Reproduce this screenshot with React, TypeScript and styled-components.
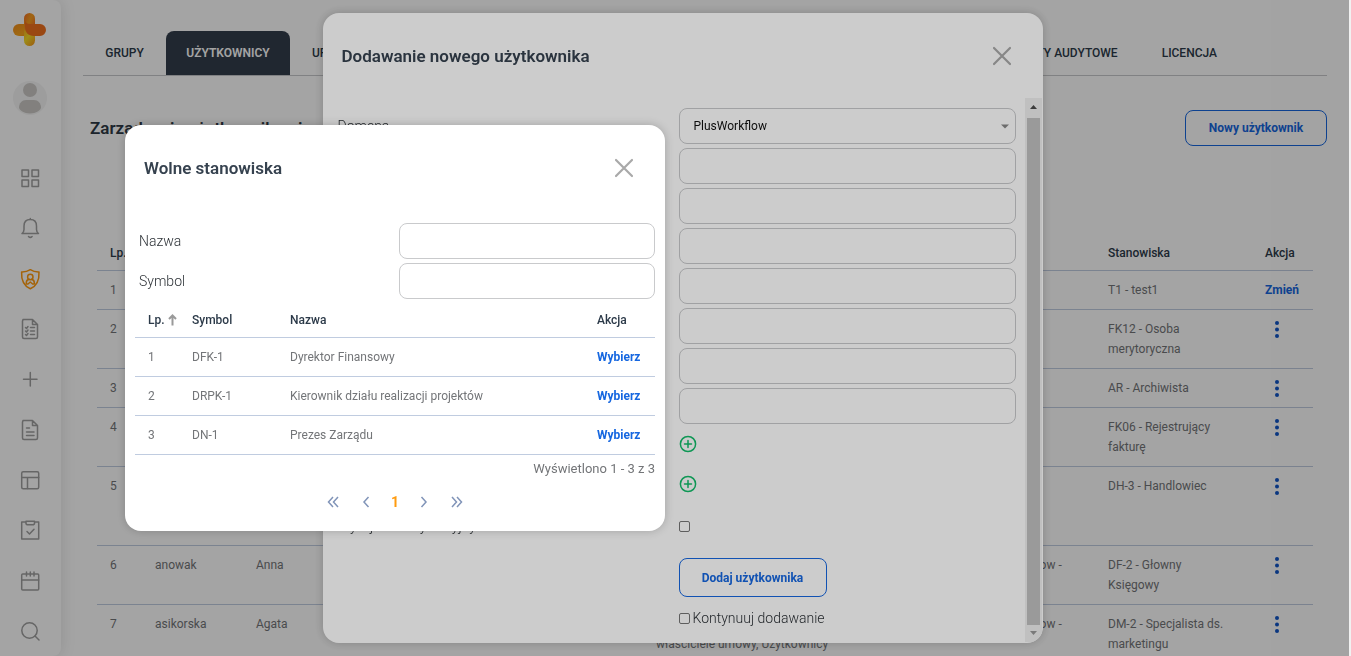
import React from "react";
import styled, { createGlobalStyle, css } from "styled-components";

const GlobalStyle = createGlobalStyle`
  *, *::before, *::after { box-sizing: border-box; }
  body {
    margin: 0;
    background: #f1f1f1;
    color: #3a4149;
    font-family: Roboto, "Liberation Sans", sans-serif;
    font-size: 13px;
    line-height: 20px;
    overflow: hidden;
  }
  button, input, select { font-family: inherit; }
`;

/* ---------- page frame ---------- */

const Page = styled.div`
  display: flex;
  height: 100vh;
  margin-right: 2px;
  background: #fff;
  overflow: hidden;
`;

const Sidebar = styled.aside`
  flex: none;
  display: flex;
  flex-direction: column;
  align-items: center;
  width: 61px;
  padding: 13px 1px 13px 0;
  border-radius: 0 8px 8px 0;
  box-shadow: 0 0 16px rgba(0, 0, 0, 0.12);
`;

const Avatar = styled.button`
  display: block;
  margin: 34px 0 51px;
  padding: 0;
  border: 0;
  background: none;
  line-height: 0;
`;

const SideNav = styled.nav`
  flex: 1;
  display: flex;
  flex-direction: column;
  justify-content: space-between;
`;

const SideLink = styled.a<{ $active?: boolean }>`
  display: block;
  height: 24px;
  color: ${(p) => (p.$active ? "#ff9b0f" : "#9f9f9f")};
`;

const Main = styled.main`
  flex: 1;
  min-width: 0;
  padding: 31px 22px 0;
`;

const Tabs = styled.nav`
  display: flex;
  justify-content: space-between;
  border-bottom: 1px solid #c8c9cc;
  padding-right: 88px;
`;

const TabGroup = styled.div`
  display: flex;
`;

const Tab = styled.a<{ $active?: boolean; $width?: number }>`
  display: block;
  min-width: ${(p) => p.$width ?? 0}px;
  padding: 12px 22px;
  color: #2c3a49;
  font-size: 12px;
  font-weight: 500;
  text-align: center;
  text-decoration: none;
  white-space: nowrap;
  ${(p) =>
    p.$active &&
    css`
      padding: 12px 20px;
      border-radius: 8px 8px 0 0;
      background: #323d4b;
      color: #fff;
      font-weight: 600;
    `}
`;

const PageHead = styled.header`
  display: flex;
  align-items: center;
  justify-content: space-between;
  padding: 34px 0 97px 7px;
`;

const PageTitle = styled.h1`
  margin: 0;
  color: #2e3945;
  font-size: 17px;
  font-weight: 600;
  line-height: 24px;
`;

const OutlineButton = styled.button<{ $width: number; $tall?: boolean }>`
  width: ${(p) => p.$width}px;
  height: ${(p) => (p.$tall ? 39 : 36)}px;
  padding: 0;
  border: 1px solid #1667e0;
  border-radius: 8px;
  background: transparent;
  color: #1667e0;
  font-size: 12px;
  font-weight: 700;
`;

/* ---------- tables ---------- */

const DataTable = styled.table`
  width: 100%;
  border-collapse: collapse;
  table-layout: fixed;
`;

const UsersWrap = styled.div`
  padding: 0 14px;
`;

const HeadCell = styled.th`
  padding: 0 0 7px 13px;
  border-bottom: 1px solid #c0cce0;
  color: #2c3a49;
  font-size: 12px;
  font-weight: 500;
  text-align: left;
  white-space: nowrap;
`;

const Cell = styled.td`
  padding: 9px 18px 9px 13px;
  border-bottom: 1px solid #c0cce0;
  color: #737578;
  font-size: 12px;
  vertical-align: top;
`;

const Col = styled.col<{ $w?: number }>`
  width: ${(p) => (p.$w ? `${p.$w}px` : "auto")};
`;

const ActionLink = styled.a`
  color: #1667e0;
  font-weight: 700;
  text-decoration: none;
`;

const MenuButton = styled.button`
  display: block;
  margin: 0;
  padding: 0 0 0 9px;
  border: 0;
  background: none;
  line-height: 0;
`;

const SortMark = styled.span`
  display: inline-block;
  margin-left: 3px;
  vertical-align: -2px;
  line-height: 0;
`;

/* ---------- dialogs ---------- */

const Layer = styled.div<{ $level: number }>`
  position: fixed;
  inset: 0 2px 0 0;
  z-index: ${(p) => p.$level};
  background: rgba(0, 0, 0, 0.2);
`;

const Dialog = styled.section`
  position: absolute;
  border-radius: 16px;
  background: #fff;
  box-shadow: 0 0 10px rgba(0, 0, 0, 0.2);
  overflow: hidden;
`;

const UserDialog = styled(Dialog)`
  top: 13px;
  bottom: 13px;
  left: calc(50% - 352px);
  width: 720px;
  display: flex;
  flex-direction: column;
`;

const PositionDialog = styled(Dialog)`
  top: 125px;
  left: 125px;
  width: 540px;
`;

const DialogHead = styled.header`
  flex: none;
  display: flex;
  align-items: center;
  justify-content: space-between;
  height: 85px;
  padding: 0 31px 0 19px;
`;

const DialogTitle = styled.h2`
  margin: 0;
  color: #36424f;
  font-size: 17px;
  font-weight: 600;
  line-height: 24px;
`;

const CloseButton = styled.button`
  padding: 0;
  border: 0;
  background: none;
  line-height: 0;
`;

const DialogBody = styled.div`
  flex: 1;
  display: flex;
  min-height: 0;
`;

const UserForm = styled.form`
  flex: 1;
  padding: 10px 9px 0 15px;
`;

const FieldRow = styled.div`
  display: grid;
  grid-template-columns: 1fr 337px;
  align-items: center;
  min-height: 36px;
  margin-bottom: 4px;
`;

const NarrowRow = styled(FieldRow)`
  grid-template-columns: 1fr 256px;
  padding-left: 4px;
`;

const Label = styled.label`
  color: #2b3035;
  font-size: 14px;
  font-weight: 300;
`;

const control = css`
  width: 100%;
  height: 36px;
  padding: 0 14px;
  border: 1px solid #c9cacc;
  border-radius: 8px;
  background: #fff;
  color: #111;
  font-size: 12px;
`;

const TextInput = styled.input`
  ${control}
`;

const SelectWrap = styled.div`
  position: relative;
`;

const Select = styled.select`
  ${control}
  appearance: none;
`;

const Caret = styled.svg`
  position: absolute;
  top: 16px;
  right: 7px;
  pointer-events: none;
`;

const AddButton = styled.button`
  align-self: start;
  justify-self: start;
  padding: 7px 0 0;
  border: 0;
  background: none;
  line-height: 0;
`;

const Check = styled.input`
  appearance: none;
  width: 11px;
  height: 11px;
  margin: 0;
  border: 1px solid #767676;
  border-radius: 2px;
`;

const FormFoot = styled.div`
  width: 337px;
  margin: 14px 0 0 auto;
`;

const ContinueRow = styled.div`
  display: flex;
  align-items: center;
  gap: 3px;
  margin-top: 11px;
`;

const ScrollBar = styled.div`
  flex: none;
  display: flex;
  flex-direction: column;
  width: 17px;
  margin: 0 1px 1px 0;
  background: #f1f1f1;
`;

const ScrollArrow = styled.svg`
  flex: none;
  display: block;
`;

const ScrollThumb = styled.div`
  flex: 1;
  margin: 0 2px;
  background: #c1c1c1;
`;

const PositionBody = styled.div`
  padding: 13px 10px 21px;
`;

const PositionTable = styled(DataTable)`
  margin-top: 11px;
`;

const Summary = styled.p`
  margin: 4px 0 0;
  color: #737578;
  font-size: 13px;
  text-align: right;
`;

const Pager = styled.nav`
  display: flex;
  align-items: center;
  justify-content: center;
  gap: 17px;
  margin-top: 15px;
`;

const PageButton = styled.button`
  display: grid;
  place-items: center;
  width: 16px;
  height: 16px;
  padding: 0;
  border: 0;
  background: none;
  color: #8094b8;
`;

const CurrentPage = styled.span`
  color: #ff9b0f;
  font-size: 14px;
  font-weight: 700;
  line-height: 16px;
`;

/* ---------- drawings ---------- */

const Glyph = ({ children }: { children: React.ReactNode }) => (
  <svg
    width="24"
    height="24"
    viewBox="0 0 24 24"
    fill="none"
    stroke="currentColor"
    strokeWidth="1.5"
    strokeLinecap="round"
    strokeLinejoin="round"
    aria-hidden="true"
  >
    {children}
  </svg>
);

const Logo = () => (
  <svg width="34" height="34" viewBox="0 0 34 34" aria-label="Plus" role="img">
    <defs>
      <linearGradient id="lgYellow" x1="0" y1="0" x2="1" y2="1">
        <stop offset="0" stopColor="#f08c1c" />
        <stop offset="0.6" stopColor="#f9a51e" />
        <stop offset="1" stopColor="#f5861f" />
      </linearGradient>
      <linearGradient id="lgFoot" x1="0" y1="0" x2="0.8" y2="1">
        <stop offset="0" stopColor="#f9ae1f" />
        <stop offset="0.45" stopColor="#f5dc28" />
        <stop offset="1" stopColor="#f49a1c" />
      </linearGradient>
      <linearGradient id="lgTop" x1="0" y1="0" x2="1" y2="0.8">
        <stop offset="0" stopColor="#ef6a22" />
        <stop offset="0.5" stopColor="#f9a01f" />
        <stop offset="1" stopColor="#ef6a22" />
      </linearGradient>
    </defs>
    <rect x="0" y="11" width="24" height="12" rx="6" fill="url(#lgYellow)" />
    <path d="M11 17h11v10.500a5.500 5.500 0 0 1-11 0z" fill="url(#lgFoot)" />
    <path d="M11 15V5.500a5.500 5.500 0 0 1 11 0V12l-5 8z" fill="url(#lgTop)" />
    <path d="M12 6c0 4 2 5 6 5h9a6 6 0 0 1 0 12h-6c-6 0-9-4-9-9z" fill="#f0701f" />
  </svg>
);

const Person = () => (
  <svg width="34" height="34" viewBox="0 0 34 34" aria-hidden="true">
    <circle cx="17" cy="17" r="17" fill="#f4f4f4" />
    <circle cx="17" cy="9" r="7" fill="#cac8c5" />
    <path d="M6 26.500c0-4 3-7.500 7-7.500h8c4 0 7 3.500 7 7.500 0 2.500-5 6-11 6s-11-3.500-11-6z" fill="#cac8c5" />
  </svg>
);

const CloseIcon = () => (
  <svg width="20" height="20" viewBox="0 0 20 20" stroke="#a9a9a9" strokeWidth="2.200" strokeLinecap="round" aria-hidden="true">
    <path d="M2 2l16 16M18 2L2 18" />
  </svg>
);

const Dots = () => (
  <svg width="6" height="20" viewBox="0 0 6 20" fill="#1055c8" aria-hidden="true">
    <circle cx="3" cy="4" r="2" />
    <circle cx="3" cy="10.500" r="2" />
    <circle cx="3" cy="17" r="2" />
  </svg>
);

const PlusCircle = () => (
  <svg width="18" height="18" viewBox="0 0 18 18" fill="none" stroke="#12bd6a" strokeWidth="1.500" strokeLinecap="round" aria-hidden="true">
    <circle cx="9" cy="9" r="7.600" />
    <path d="M9 5.500v7M5.500 9h7" />
  </svg>
);

const Chevron = ({ d }: { d: string }) => (
  <svg width="12" height="12" viewBox="0 0 12 12" fill="none" stroke="currentColor" strokeWidth="1.500" aria-hidden="true">
    <path d={d} />
  </svg>
);

const fileOutline = "M5 2.500h9.500l5 5V20a1.500 1.500 0 0 1-1.500 1.500H6A1.500 1.500 0 0 1 4.500 20V4A1.500 1.500 0 0 1 6 2.500M14.500 2.500v5h5";

const sideItems: { name: string; active?: boolean; icon: React.ReactNode }[] = [
  {
    name: "Pulpit",
    icon: (
      <>
        <rect x="4" y="4" width="6.500" height="6.500" />
        <rect x="14" y="4" width="6.500" height="6.500" />
        <rect x="4" y="14" width="6.500" height="6.500" />
        <rect x="14" y="14" width="6.500" height="6.500" />
      </>
    ),
  },
  {
    name: "Powiadomienia",
    icon: (
      <>
        <path d="M4 17.500h16.500c-1.500-1-2-2-2-4V10c0-4-2.200-6.500-6.200-6.500S6 6 6 10v3.500c0 2-.5 3-2 4zM12.300 2.500v1" />
        <path d="M10.500 20.500c1 1 2.600 1 3.600 0" />
      </>
    ),
  },
  {
    name: "Administracja",
    active: true,
    icon: (
      <>
        <path d="M12.300 2.700c2.700 1.800 5.500 2.400 8.700 2.300.4 7.300-1.600 13.600-8.700 16.800C5.200 18.600 3.200 12.300 3.600 5c3.200.1 6-.5 8.700-2.300z" />
        <circle cx="12.300" cy="10" r="2.700" />
        <path d="M8.300 17v-1.200c0-1.800 1.200-3.200 2.900-3.500M16.300 17v-1.200c0-1.800-1.200-3.200-2.900-3.500M8.500 17h1.500l2.300-2 2.300 2h1.500" />
      </>
    ),
  },
  {
    name: "Zadania",
    icon: (
      <>
        <path d={fileOutline} />
        <path d="M12.500 10.500h4M12.500 14h4M12.500 17.500h4M7.500 10.500l1 1 1.500-2M7.500 14l1 1 1.500-2M7.500 17.500l1 1 1.500-2" />
      </>
    ),
  },
  { name: "Dodaj", icon: <path d="M12.300 5.500v13.500M5.500 12.300h13.500" /> },
  {
    name: "Dokumenty",
    icon: (
      <>
        <path d={fileOutline} />
        <path d="M8.500 10h3M8.500 14h7.500M8.500 17.500h7.500" />
      </>
    ),
  },
  {
    name: "Widoki",
    icon: (
      <>
        <rect x="3.700" y="3.700" width="17" height="17" rx="1.500" />
        <path d="M3.700 9.500h17M9.500 9.500v11" />
      </>
    ),
  },
  {
    name: "Sprawy",
    icon: (
      <>
        <path d="M8 4H3.700v17h17V4h-4.200M8 3.200h8.500v2.600l-1.200 1H9.200L8 5.800zM9 13.500l2.500 2.500 4.500-4.800" />
      </>
    ),
  },
  {
    name: "Kalendarz",
    icon: (
      <>
        <rect x="3.700" y="5" width="17" height="16" rx="1" />
        <path d="M3.700 11h17M8.500 3v4M12.300 3v4M16 3v4" />
      </>
    ),
  },
  {
    name: "Szukaj",
    icon: (
      <>
        <circle cx="11.500" cy="11.500" r="7.700" />
        <path d="M17 17l4 4" />
      </>
    ),
  },
];

const users = [
  { login: "admin", first: "Adam", last: "Admin", groups: ["Administratorzy"], unit: "", post: "T1 - test1", edit: true },
  { login: "akowal", first: "Anna", last: "Kowal", groups: ["Użytkownicy"], unit: "", post: "FK12 - Osoba merytoryczna" },
  { login: "alis", first: "Adam", last: "Lis", groups: ["Użytkownicy"], unit: "", post: "AR - Archiwista" },
  { login: "amazur", first: "Alicja", last: "Mazur", groups: ["Użytkownicy"], unit: "", post: "FK06 - Rejestrujący fakturę" },
  {
    login: "anowacka",
    first: "Anna",
    last: "Nowacka",
    groups: ["Handlowcy, Koordynatorzy,", "Opiekunowie klienta,", "Użytkownicy"],
    unit: "",
    post: "DH-3 - Handlowiec",
  },
  { login: "anowak", first: "Anna", last: "Nowak", groups: ["Księgowość"], unit: "PlusWorkflow -", post: "DF-2 - Głowny Księgowy" },
  {
    login: "asikorska",
    first: "Agata",
    last: "Sikorska",
    groups: ["Koordynatorzy,", "właściciele umowy, Użytkownicy"],
    unit: "PlusWorkflow -",
    post: "DM-2 - Specjalista ds. marketingu",
  },
];

const positions = [
  { symbol: "DFK-1", name: "Dyrektor Finansowy" },
  { symbol: "DRPK-1", name: "Kierownik działu realizacji projektów" },
  { symbol: "DN-1", name: "Prezes Zarządu" },
];

const userFields = ["Login", "Hasło", "Powtórz hasło", "Imię", "Nazwisko", "E-mail", "Numer"];

export default function App() {
  return (
    <>
      <GlobalStyle />
      <Page>
        <Sidebar>
          <Logo />
          <Avatar type="button" aria-label="Profil">
            <Person />
          </Avatar>
          <SideNav>
            {sideItems.map((item) => (
              <SideLink key={item.name} href="#" aria-label={item.name} $active={item.active}>
                <Glyph>{item.icon}</Glyph>
              </SideLink>
            ))}
          </SideNav>
        </Sidebar>
        <Main>
          <Tabs>
            <TabGroup>
              <Tab href="#" $width={83}>GRUPY</Tab>
              <Tab href="#" $width={124} $active>UŻYTKOWNICY</Tab>
              <Tab href="#">UPRAWNIENIA</Tab>
            </TabGroup>
            <TabGroup>
              <Tab href="#">RAPORTY AUDYTOWE</Tab>
              <Tab href="#">LICENCJA</Tab>
            </TabGroup>
          </Tabs>
          <PageHead>
            <PageTitle>Zarządzanie użytkownikami</PageTitle>
            <OutlineButton type="button" $width={142}>Nowy użytkownik</OutlineButton>
          </PageHead>
          <UsersWrap>
            <DataTable>
              <colgroup>
                <Col $w={45} />
                <Col $w={101} />
                <Col $w={140} />
                <Col $w={260} />
                <Col $w={326} />
                <Col />
                <Col $w={157} />
                <Col $w={61} />
              </colgroup>
              <thead>
                <tr>
                  {["Lp.", "Login", "Imię", "Nazwisko", "Grupy", "Struktura", "Stanowiska", "Akcja"].map((h) => (
                    <HeadCell key={h} scope="col">{h}</HeadCell>
                  ))}
                </tr>
              </thead>
              <tbody>
                {users.map((u, i) => (
                  <tr key={u.login}>
                    <Cell>{i + 1}</Cell>
                    <Cell>{u.login}</Cell>
                    <Cell>{u.first}</Cell>
                    <Cell>{u.last}</Cell>
                    <Cell>
                      {u.groups.map((g) => (
                        <div key={g}>{g}</div>
                      ))}
                    </Cell>
                    <Cell>{u.unit}</Cell>
                    <Cell>{u.post}</Cell>
                    <Cell>
                      {u.edit ? (
                        <ActionLink href="#">Zmień</ActionLink>
                      ) : (
                        <MenuButton type="button" aria-label="Akcje"><Dots /></MenuButton>
                      )}
                    </Cell>
                  </tr>
                ))}
              </tbody>
            </DataTable>
          </UsersWrap>
        </Main>
      </Page>

      <Layer $level={1}>
        <UserDialog role="dialog" aria-labelledby="user-title">
          <DialogHead>
            <DialogTitle id="user-title">Dodawanie nowego użytkownika</DialogTitle>
            <CloseButton type="button" aria-label="Zamknij"><CloseIcon /></CloseButton>
          </DialogHead>
          <DialogBody>
            <UserForm>
              <FieldRow>
                <Label htmlFor="domain">Domena</Label>
                <SelectWrap>
                  <Select id="domain">
                    <option>PlusWorkflow</option>
                  </Select>
                  <Caret width="8" height="5" viewBox="0 0 8 5" fill="#888">
                    <path d="M0 0.500h8L4 4.500z" />
                  </Caret>
                </SelectWrap>
              </FieldRow>
              {userFields.map((name, i) => (
                <FieldRow key={name}>
                  <Label htmlFor={`field-${i}`}>{name}</Label>
                  <TextInput id={`field-${i}`} type={i === 1 || i === 2 ? "password" : "text"} />
                </FieldRow>
              ))}
              <FieldRow>
                <Label as="span">Grupy</Label>
                <AddButton type="button" aria-label="Dodaj grupę"><PlusCircle /></AddButton>
              </FieldRow>
              <FieldRow>
                <Label as="span">Stanowiska</Label>
                <AddButton type="button" aria-label="Dodaj stanowisko"><PlusCircle /></AddButton>
              </FieldRow>
              <FieldRow>
                <Label htmlFor="mail">Wyślij link aktywacyjny</Label>
                <Check id="mail" type="checkbox" />
              </FieldRow>
              <FormFoot>
                <OutlineButton type="button" $width={148} $tall>Dodaj użytkownika</OutlineButton>
                <ContinueRow>
                  <Check id="continue" type="checkbox" />
                  <Label htmlFor="continue">Kontynuuj dodawanie</Label>
                </ContinueRow>
              </FormFoot>
            </UserForm>
            <ScrollBar aria-hidden="true">
              <ScrollArrow width="17" height="20" viewBox="0 0 17 20" fill="#4c4c4c">
                <path d="M5 11h7L8.500 7z" />
              </ScrollArrow>
              <ScrollThumb />
              <ScrollArrow width="17" height="17" viewBox="0 0 17 17" fill="#999">
                <path d="M5 6h7l-3.500 4z" />
              </ScrollArrow>
            </ScrollBar>
          </DialogBody>
        </UserDialog>
      </Layer>

      <Layer $level={2}>
        <PositionDialog role="dialog" aria-labelledby="position-title">
          <DialogHead>
            <DialogTitle id="position-title">Wolne stanowiska</DialogTitle>
            <CloseButton type="button" aria-label="Zamknij"><CloseIcon /></CloseButton>
          </DialogHead>
          <PositionBody>
            <NarrowRow>
              <Label htmlFor="pos-name">Nazwa</Label>
              <TextInput id="pos-name" />
            </NarrowRow>
            <NarrowRow>
              <Label htmlFor="pos-symbol">Symbol</Label>
              <TextInput id="pos-symbol" />
            </NarrowRow>
            <PositionTable>
              <colgroup>
                <Col $w={44} />
                <Col $w={98} />
                <Col />
                <Col $w={71} />
              </colgroup>
              <thead>
                <tr>
                  <HeadCell scope="col">
                    Lp.
                    <SortMark>
                      <svg width="9" height="12" viewBox="0 0 9 12" fill="none" stroke="#9a9a9a" strokeWidth="2" aria-hidden="true">
                        <path d="M4.500 11.500V2M1 5l3.500-3.500L8 5" />
                      </svg>
                    </SortMark>
                  </HeadCell>
                  <HeadCell scope="col">Symbol</HeadCell>
                  <HeadCell scope="col">Nazwa</HeadCell>
                  <HeadCell scope="col">Akcja</HeadCell>
                </tr>
              </thead>
              <tbody>
                {positions.map((p, i) => (
                  <tr key={p.symbol}>
                    <Cell>{i + 1}</Cell>
                    <Cell>{p.symbol}</Cell>
                    <Cell>{p.name}</Cell>
                    <Cell><ActionLink href="#">Wybierz</ActionLink></Cell>
                  </tr>
                ))}
              </tbody>
            </PositionTable>
            <Summary>Wyświetlono 1 - 3 z 3</Summary>
            <Pager aria-label="Strony">
              <PageButton type="button" aria-label="Pierwsza"><Chevron d="M6 1L1.500 6 6 11M11 1L6.500 6 11 11" /></PageButton>
              <PageButton type="button" aria-label="Poprzednia"><Chevron d="M8.500 1L4 6l4.500 5" /></PageButton>
              <CurrentPage aria-current="page">1</CurrentPage>
              <PageButton type="button" aria-label="Następna"><Chevron d="M3.500 1L8 6l-4.500 5" /></PageButton>
              <PageButton type="button" aria-label="Ostatnia"><Chevron d="M1 1l4.500 5L1 11M6 1l4.500 5L6 11" /></PageButton>
            </Pager>
          </PositionBody>
        </PositionDialog>
      </Layer>
    </>
  );
}
